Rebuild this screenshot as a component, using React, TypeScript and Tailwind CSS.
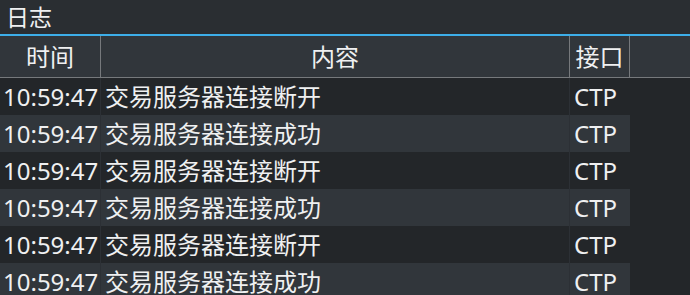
const rows = [
  { time: "10:59:47", msg: "交易服务器连接断开", api: "CTP" },
  { time: "10:59:47", msg: "交易服务器连接成功", api: "CTP" },
  { time: "10:59:47", msg: "交易服务器连接断开", api: "CTP" },
  { time: "10:59:47", msg: "交易服务器连接成功", api: "CTP" },
  { time: "10:59:47", msg: "交易服务器连接断开", api: "CTP" },
  { time: "10:59:47", msg: "交易服务器连接成功", api: "CTP" },
];

export default function App() {
  return (
    <div
      className="w-[690px] h-[295px] overflow-hidden bg-[#232629] text-[#eff0f1]"
      style={{ fontFamily: '"Noto Sans", "Noto Sans CJK SC", sans-serif' }}
    >
      {/* dock title */}
      <div className="h-[34px] bg-[#2a2e32] flex items-center pl-[6px] text-[23px] leading-none">
        日志
      </div>
      <div className="h-[2px] bg-[#3daee9]" />

      {/* header */}
      <div className="grid grid-cols-[101px_469px_60px_1fr] h-[42px] bg-[#31363b] border-b border-[#76797c] text-[24px]">
        <div className="flex items-center justify-center border-r border-[#76797c]">时间</div>
        <div className="flex items-center justify-center border-r border-[#76797c]">内容</div>
        <div className="flex items-center justify-center border-r border-[#76797c]">接口</div>
        <div />
      </div>

      {/* rows */}
      {rows.map((r, i) => (
        <div key={i} className="grid grid-cols-[101px_469px_60px_1fr] h-[37px] text-[24px]">
          <div
            className={`flex items-center pl-[3px] whitespace-nowrap border-r border-[#2c3035] ${
              i % 2 ? "bg-[#31363b]" : "bg-[#232629]"
            }`}
          >
            {r.time}
          </div>
          <div
            className={`flex items-center pl-[4px] whitespace-nowrap border-r border-[#2c3035] ${
              i % 2 ? "bg-[#31363b]" : "bg-[#232629]"
            }`}
          >
            {r.msg}
          </div>
          <div
            className={`flex items-center pl-[4px] whitespace-nowrap ${
              i % 2 ? "bg-[#31363b]" : "bg-[#232629]"
            }`}
          >
            {r.api}
          </div>
          <div className="bg-[#232629]" />
        </div>
      ))}
    </div>
  );
}
